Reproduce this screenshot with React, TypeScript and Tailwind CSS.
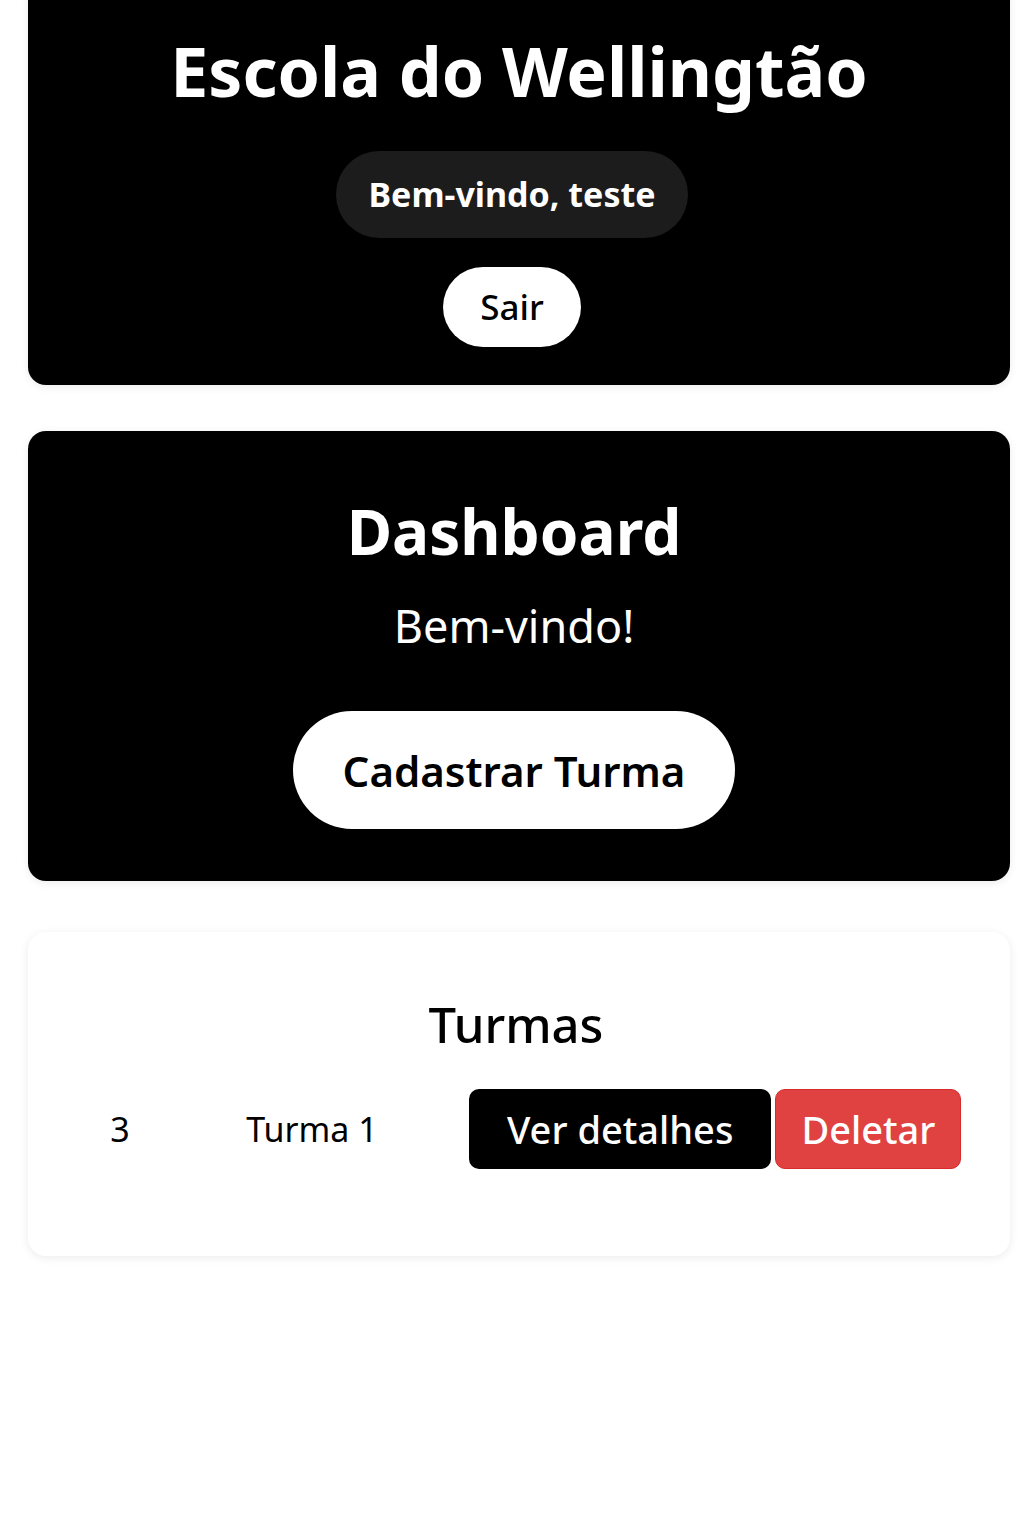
export default function App() {
  const font = { fontFamily: '"Noto Sans", "Open Sans", sans-serif' };
  return (
    <div className="min-h-[1536px] bg-white pl-[28px] pr-[14px]" style={font}>
      <div className="flex flex-col pb-[30px]">
        <div className="-mt-[20px] flex flex-col items-center rounded-[18px] bg-black pt-[57px] pr-[14px] pb-[38px] shadow-[0_2px_8px_rgba(0,0,0,0.08)]">
          <h1 className="-mr-[14px] text-[68px] font-bold leading-none text-white">Escola do Wellingtão</h1>
          <div className="mt-[46px] flex h-[87px] items-center rounded-full bg-[#1c1c1c] px-[32px] text-[34px] font-bold text-white">
            Bem-vindo, teste
          </div>
          <button className="mt-[29px] flex h-[80px] items-center rounded-full bg-white px-[37px] text-[35px] font-medium text-black">
            Sair
          </button>
        </div>

        <div className="mt-[46px] flex flex-col items-center rounded-[18px] bg-black pt-[69px] pr-[10px] pb-[52px] shadow-[0_2px_8px_rgba(0,0,0,0.08)]">
          <h2 className="text-[62px] font-bold leading-none text-white">Dashboard</h2>
          <p className="mt-[41px] text-[45px] leading-none text-white">Bem-vindo!</p>
          <button className="mt-[63px] flex h-[118px] items-center rounded-full bg-white px-[50px] text-[42px] font-semibold text-black">
            Cadastrar Turma
          </button>
        </div>

        <div className="mt-[51px] flex flex-col items-center rounded-[18px] bg-white pt-[68px] pb-[87px] shadow-[0_2px_10px_rgba(0,0,0,0.08)]">
          <h3 className="mr-[6px] text-[49px] font-medium leading-none text-black">Turmas</h3>
          <div className="mt-[40px] flex w-full items-center px-[40px]">
            <div className="w-[104px] text-center text-[34px] text-black">3</div>
            <div className="w-[280px] text-center text-[34px] text-black">Turma 1</div>
            <div className="ml-[17px] flex items-center gap-[4px]">
              <button className="flex h-[80px] items-center whitespace-nowrap rounded-[10px] bg-black px-[38px] text-[38px] font-medium text-white">
                Ver detalhes
              </button>
              <button className="flex h-[80px] items-center whitespace-nowrap rounded-[10px] border border-[#d62c2c] bg-[#e04141] px-[25px] text-[38px] font-medium text-white">
                Deletar
              </button>
            </div>
          </div>
        </div>
      </div>
    </div>
  );
}
